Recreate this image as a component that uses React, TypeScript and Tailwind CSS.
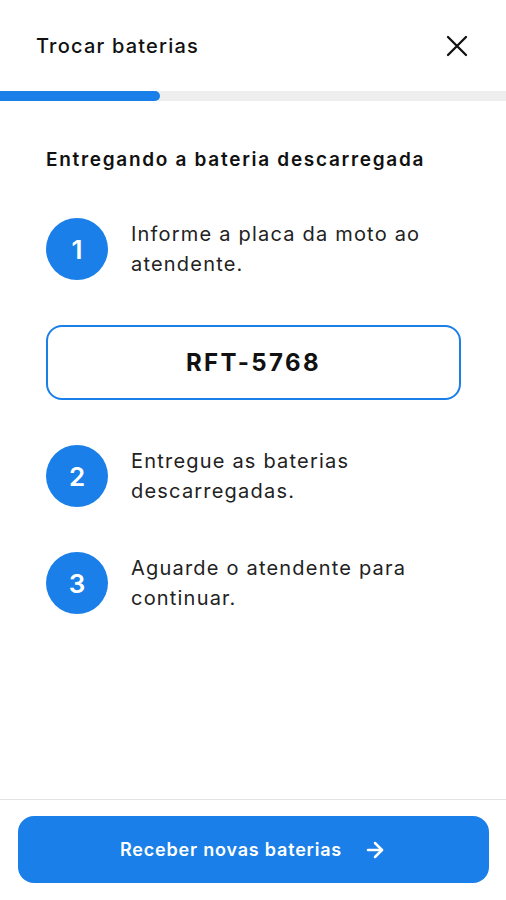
import { ArrowRight } from 'lucide-react';

const BLUE = 'bg-[#1a7fe8]';

const steps = [
  { n: 1, text: 'Informe a placa da moto ao atendente.' },
  { n: 2, text: 'Entregue as baterias descarregadas.' },
  { n: 3, text: 'Aguarde o atendente para continuar.' },
];

function Step({ n, text }: { n: number; text: string }) {
  return (
    <div className="flex items-center gap-[23px]">
      <span
        className={`${BLUE} inline-flex h-[62px] w-[62px] shrink-0 items-center justify-center rounded-full text-[26px] font-semibold text-white`}
      >
        {n}
      </span>
      <p className="flex-1 text-[20px] leading-[30px] tracking-[1.2px] text-[#222]">{text}</p>
    </div>
  );
}

export default function App() {
  return (
    <div
      className="flex h-[900px] w-full flex-col bg-white text-[#111]"
      style={{ fontFamily: 'Inter, "Noto Sans", sans-serif' }}
    >
      <header className="flex h-[91px] items-center justify-between pl-[36px] pr-[38px]">
        <h1 className="text-[20px] font-medium tracking-[1.2px]">Trocar baterias</h1>
        <button type="button" aria-label="Fechar" className="text-[#111]">
          <svg width="22" height="22" viewBox="0 0 22 22" fill="none" stroke="currentColor" strokeWidth="2.3" strokeLinecap="round">
            <path d="M2 2l18 18M20 2 2 20" />
          </svg>
        </button>
      </header>

      <div className="h-[10px] w-full bg-[#eeeeee]">
        <div className={`${BLUE} h-full w-[160px] rounded-r-full`} />
      </div>

      <main className="flex-1 px-[46px] pt-[47px]">
        <h2 className="text-[19px] font-semibold leading-[24px] tracking-[1.7px]">Entregando a bateria descarregada</h2>

        <div className="mt-[46px] flex flex-col gap-[45px]">
          <Step {...steps[0]} />
          <div className="flex h-[75px] w-[415px] items-center justify-center rounded-[16px] border-2 border-[#1a7fe8]">
            <span className="text-[24px] font-bold tracking-[2.4px]">RFT-5768</span>
          </div>
          <Step {...steps[1]} />
          <Step {...steps[2]} />
        </div>
      </main>

      <footer className="border-t border-[#e3e3e3] pb-[17px] pl-[18px] pr-[17px] pt-[16px]">
        <button
          type="button"
          className={`${BLUE} flex h-[67px] w-full items-center justify-center gap-[21px] rounded-[16px] text-[18px] font-semibold tracking-[0.8px] text-white`}
        >
          Receber novas baterias
          <ArrowRight className="h-[24px] w-[24px]" strokeWidth={2.5} />
        </button>
      </footer>
    </div>
  );
}
